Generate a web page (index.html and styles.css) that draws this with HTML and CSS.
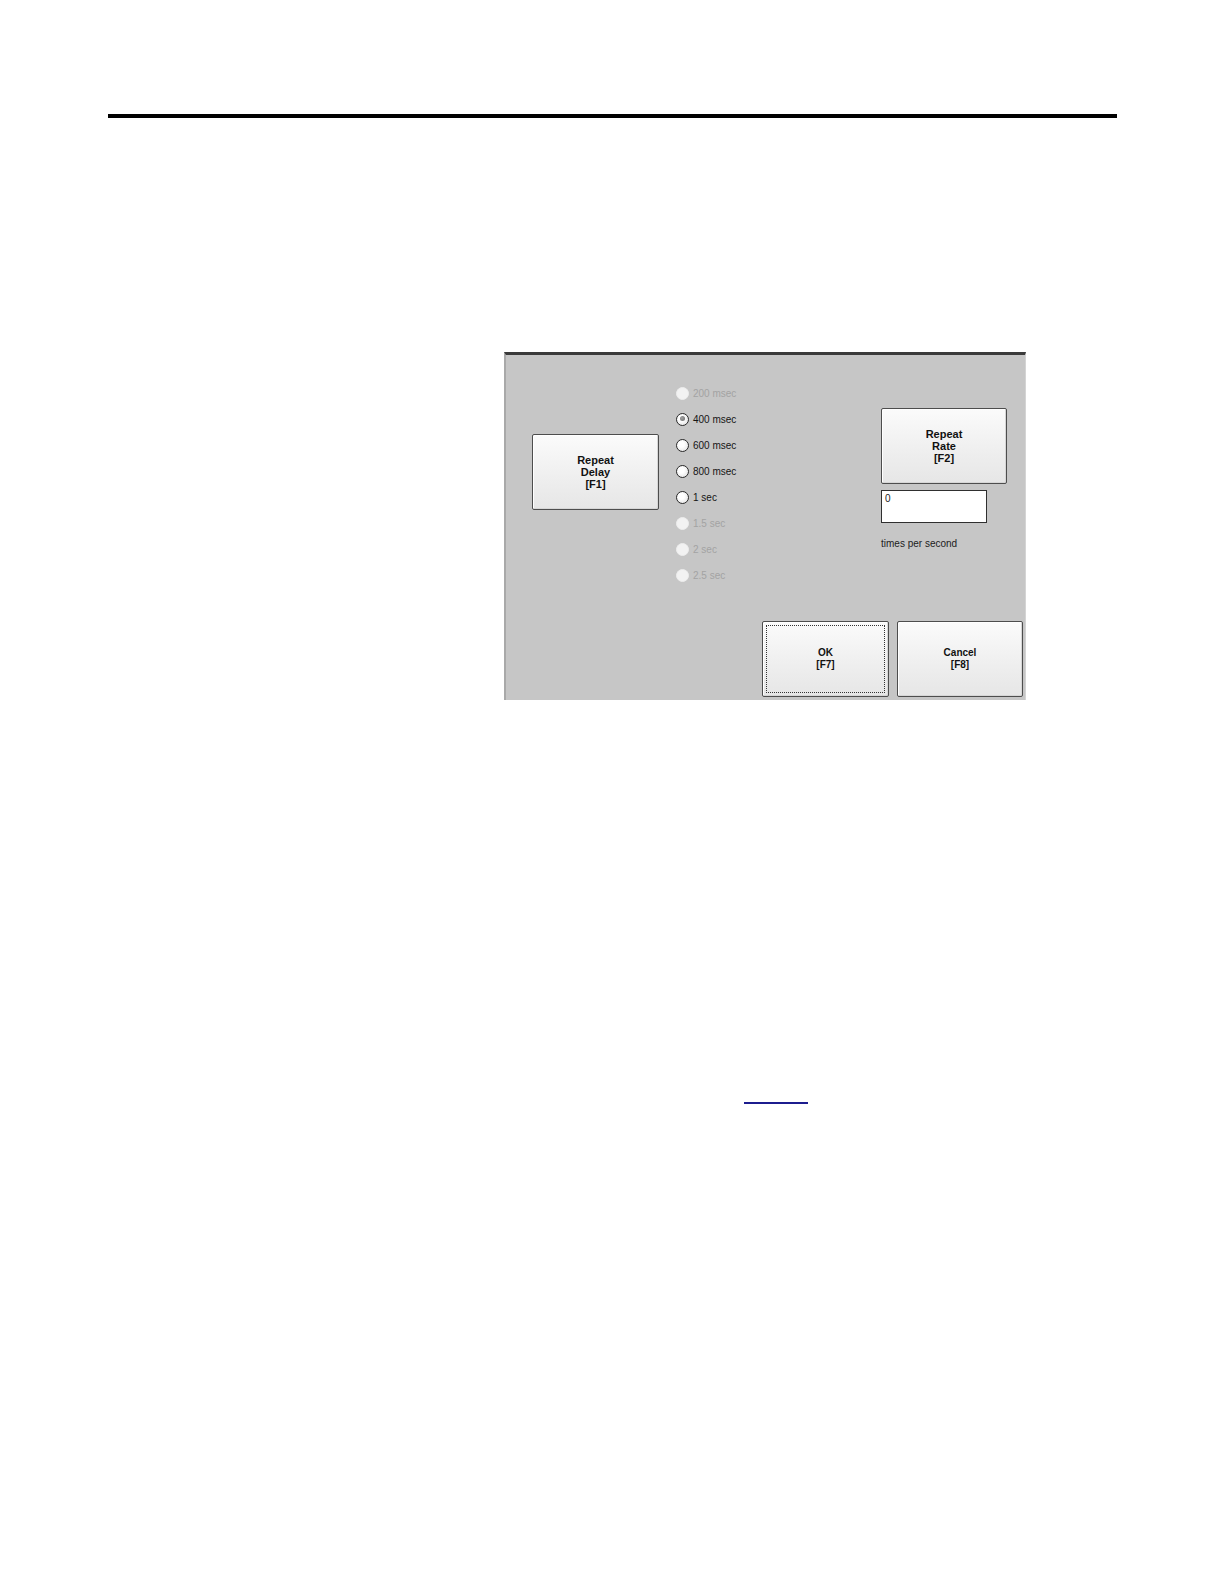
FILE: index.html
```html
<!DOCTYPE html>
<html>
<head>
<meta charset="utf-8">
<link rel="stylesheet" href="styles.css">
</head>
<body>
<div class="page">
  <div class="rule"></div>
  <div class="dialog">
    <div class="top">
      <div class="col-left">
        <div class="btn"><span>Repeat<br>Delay<br>[F1]</span></div>
      </div>
      <div class="col-radios">
        <div class="radio disabled"><span class="dot"></span><span class="lbl">200 msec</span></div>
        <div class="radio checked"><span class="dot"></span><span class="lbl">400 msec</span></div>
        <div class="radio"><span class="dot"></span><span class="lbl">600 msec</span></div>
        <div class="radio"><span class="dot"></span><span class="lbl">800 msec</span></div>
        <div class="radio"><span class="dot"></span><span class="lbl">1 sec</span></div>
        <div class="radio disabled"><span class="dot"></span><span class="lbl">1.5 sec</span></div>
        <div class="radio disabled"><span class="dot"></span><span class="lbl">2 sec</span></div>
        <div class="radio disabled"><span class="dot"></span><span class="lbl">2.5 sec</span></div>
      </div>
      <div class="col-right">
        <div class="btn btn-rate"><span>Repeat<br>Rate<br>[F2]</span></div>
        <div class="field">0</div>
        <div class="caption">times per second</div>
      </div>
    </div>
    <div class="bottom">
      <div class="btn btn-ok focused"><span>OK<br>[F7]</span></div>
      <div class="btn btn-cancel"><span>Cancel<br>[F8]</span></div>
    </div>
  </div>
  <div class="linkline"><a class="xref" href="#"></a></div>
</div>
</body>
</html>
```

FILE: styles.css
```css
html, body {
  margin: 0;
  padding: 0;
  background: #ffffff;
}
.page {
  width: 1224px;
  height: 1584px;
  position: relative;
  overflow: hidden;
  font-family: "Liberation Sans", Arial, sans-serif;
}
.rule {
  margin-top: 114px;
  margin-left: 108px;
  width: 1009px;
  height: 4px;
  background: #000000;
}
.dialog {
  margin-top: 234px;
  margin-left: 504px;
  width: 522px;
  height: 348px;
  box-sizing: border-box;
  border-top: 3px solid #3a3a3a;
  border-left: 2px solid #a9a9a9;
  border-right: 1px solid #d4d4d4;
  background: #c6c6c6;
  display: flex;
  flex-direction: column;
}
.top {
  display: flex;
  height: 266px;
}
.col-left {
  width: 170px;
  box-sizing: border-box;
  padding-left: 26px;
  padding-top: 79px;
}
.col-radios {
  width: 205px;
  box-sizing: border-box;
  padding-top: 25px;
  display: flex;
  flex-direction: column;
}
.col-right {
  padding-top: 53px;
  display: flex;
  flex-direction: column;
}
.btn {
  width: 127px;
  height: 76px;
  box-sizing: border-box;
  border: 1px solid #4d4d4d;
  border-radius: 2px;
  background: linear-gradient(#fbfbfb, #eeeeee 60%, #e6e6e6);
  box-shadow: inset 1px 1px 0 #ffffff, inset -1px -1px 0 #d6d6d6;
  display: flex;
  align-items: center;
  justify-content: center;
  text-align: center;
  font-size: 11px;
  font-weight: bold;
  line-height: 12px;
  color: #111111;
  position: relative;
}
.btn-rate {
  width: 126px;
}
.btn-cancel {
  width: 126px;
}
.btn-ok span, .btn-cancel span {
  font-size: 10px;
}
.focused::after {
  content: "";
  position: absolute;
  left: 3px;
  top: 3px;
  right: 3px;
  bottom: 3px;
  border: 1px dotted #333333;
}
.radio {
  height: 26px;
  display: flex;
  align-items: center;
  gap: 4px;
  font-size: 10px;
  color: #151515;
}
.dot {
  width: 13px;
  height: 13px;
  box-sizing: border-box;
  border-radius: 50%;
  border: 1.5px solid #2a2a2a;
  background: radial-gradient(circle at 40% 40%, #ffffff 30%, #dcdcdc 100%);
  position: relative;
  flex: none;
}
.checked .dot::after {
  content: "";
  position: absolute;
  left: 2.5px;
  top: 2.5px;
  width: 5px;
  height: 5px;
  border-radius: 50%;
  background: radial-gradient(circle at 40% 40%, #a0a0a0, #6a6a6a);
}
.disabled {
  color: #a3a3a3;
}
.disabled .dot {
  border-color: #ededed;
  background: #f2f2f2;
}
.field {
  margin-top: 6px;
  width: 106px;
  height: 33px;
  box-sizing: border-box;
  border: 1px solid #2f2f2f;
  background: #ffffff;
  font-size: 10px;
  line-height: 12px;
  padding: 2px 3px;
  color: #222222;
}
.caption {
  margin-top: 15px;
  font-size: 10px;
  line-height: 12px;
  color: #1c1c1c;
}
.bottom {
  display: flex;
  gap: 8px;
  padding-left: 256px;
}
.linkline {
  margin-top: 402px;
  margin-left: 744px;
  height: 2px;
}
.xref {
  display: block;
  width: 64px;
  height: 0;
  border-bottom: 2px solid #1c1c8e;
}
```
